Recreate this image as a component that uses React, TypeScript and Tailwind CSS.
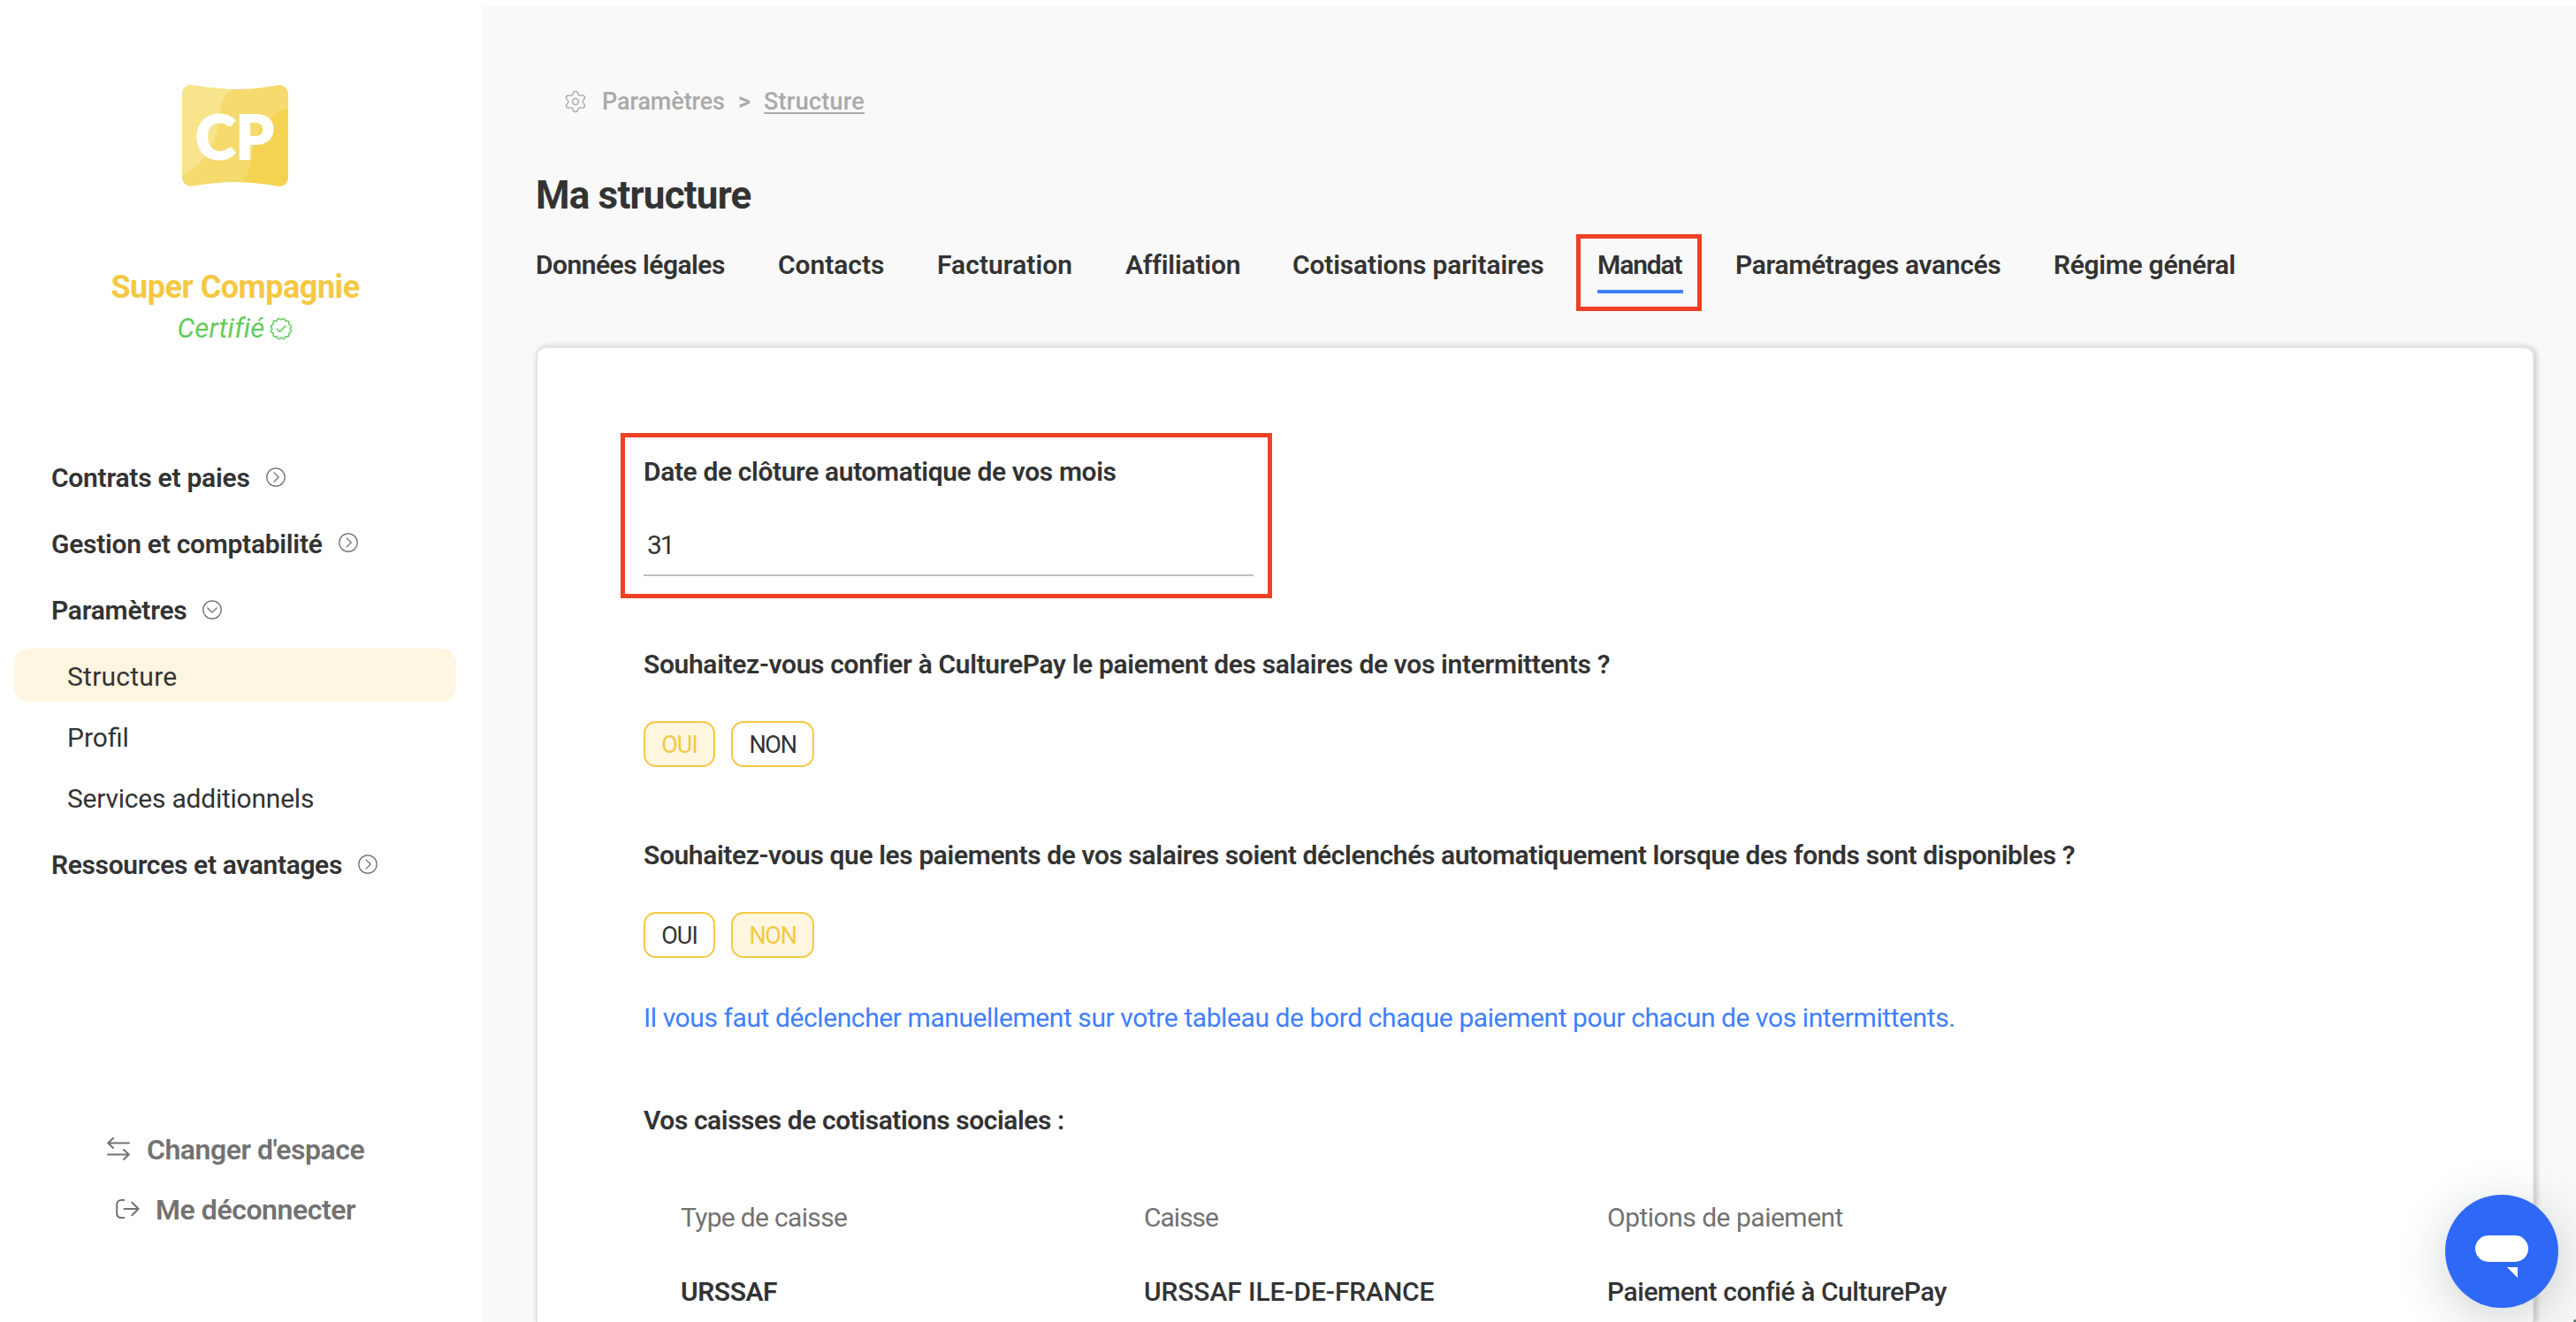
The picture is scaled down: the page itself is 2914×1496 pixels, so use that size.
import React from "react";
import { Settings } from "lucide-react";

function Logo() {
  return (
    <svg width="120" height="115" viewBox="0 0 120 115" className="block">
      <defs>
        <clipPath id="tile">
          <path d="M0 11C0 4 5 -.5 12 .5Q60 9.5 108 .5C115 -.5 120 4 120 11V104C120 111 115 115.5 108 114.5Q60 105.5 12 114.5C5 115.5 0 111 0 104Z" />
        </clipPath>
      </defs>
      <g clipPath="url(#tile)">
        <rect width="120" height="115" fill="#f5da6e" />
        <path d="M58 5C49 10 44 20 42.5 31C40 55 37 68 26 81C18 92 10 98 0 103V0H58Z" fill="#f8e48c" />
        <path d="M120 27C112 29 107 32 102 36C94 42 86 52 82 65C79 78 77 98 69 110V115H120Z" fill="#f5d352" />
      </g>
      <text x="15 60.5" y="83.5" fill="#fff" fontFamily="Lato" fontWeight="900" fontSize="69" stroke="#fff" strokeWidth="2">
        CP
      </text>
    </svg>
  );
}

const scallop =
  Array.from({ length: 144 }, (_, i) => {
    const a = (i / 144) * Math.PI * 2;
    const r = 11.1 + 0.8 * Math.cos(12 * a + Math.PI);
    return `${i ? "L" : "M"}${(13 + r * Math.sin(a)).toFixed(2)} ${(13 - r * Math.cos(a)).toFixed(2)}`;
  }).join("") + "Z";

function CertifiedBadge() {
  return (
    <svg width="26" height="26" viewBox="0 0 26 26" fill="none" stroke="#6fd067" strokeWidth="1.7" strokeLinejoin="round" strokeLinecap="round">
      <path d={scallop} />
      <path d="M8.3 13.4L11.4 16.4L17.9 9.8" />
    </svg>
  );
}

function CircleChevron({ open = false, className = "" }: { open?: boolean; className?: string }) {
  return (
    <svg width="22" height="22" viewBox="0 0 22 22" fill="none" stroke="#6a6a6a" strokeWidth="1.2" strokeLinecap="round" strokeLinejoin="round" className={className}>
      <circle cx="11" cy="11" r="10.2" />
      <path d={open ? "M5.8 9L11 14.2L16.2 9" : "M9 5.8L14.2 11L9 16.2"} />
    </svg>
  );
}

function SwapIcon() {
  return (
    <svg width="26" height="26" viewBox="0 0 26 26" fill="none" stroke="#727272" strokeWidth="2" strokeLinecap="round" strokeLinejoin="round" className="-mt-[2px]">
      <path d="M25 6.5H1.2M7 1L1.2 6.5L7 12" />
      <path d="M1 19.5H24.8M19 14L24.8 19.5L19 25" />
    </svg>
  );
}

function LogoutIcon() {
  return (
    <svg width="27" height="22" viewBox="0 0 27 22" fill="none" stroke="#727272" strokeWidth="2" strokeLinecap="round" strokeLinejoin="round" className="-mt-[2px]">
      <path d="M9.3 1H6.5C3.2 1 1.2 3 1.2 6V16C1.2 19 3.2 21 6.5 21H9.3" />
      <path d="M9.5 11H25.6M18.3 3.8L25.6 11L18.3 18.2" />
    </svg>
  );
}

function Choice({ value }: { value: "OUI" | "NON" }) {
  const on = "border-[#f5c843] bg-[#fff6e0] text-[#f5c843]";
  const off = "border-[#f5c843] bg-white text-[#333333]";
  return (
    <div className="flex h-[52px] gap-[18px] text-[27px] leading-[52px]">
      <div className={`flex w-[81px] items-center justify-center rounded-[14px] border-2 pt-px tracking-[-0.9px] ${value === "OUI" ? on : off}`}>OUI</div>
      <div className={`flex w-[94px] items-center justify-center rounded-[14px] border-2 pt-px tracking-[-1.3px] ${value === "NON" ? on : off}`}>NON</div>
    </div>
  );
}

export default function App() {
  return (
    <div className="relative flex h-[1496px] w-[2914px] overflow-hidden whitespace-nowrap bg-white font-[Roboto,sans-serif] text-[30px] leading-10 text-[#333333]">
      <aside className="flex w-[546px] shrink-0 flex-col pl-4 pr-[30px] pt-24">
        <div className="flex flex-col items-center">
          <Logo />
          <div className="mt-[94px] text-[36px] font-bold tracking-[-0.48px] text-[#f5c843]">Super Compagnie</div>
          <div className="mt-[7px] flex h-10 items-center gap-[6px] text-[#62cc5a]">
            <span className="text-[31px] italic tracking-[0.2px]">Certifié</span>
            <CertifiedBadge />
          </div>
        </div>

        <nav className="mt-[129px] flex flex-col font-semibold">
          <div className="flex h-10 items-center pl-[42px]">
            <span className="w-[243px] tracking-[-0.25px]">Contrats et paies</span>
            <CircleChevron className="-mt-[3px]" />
          </div>
          <div className="mt-[35px] flex h-10 items-center pl-[42px]">
            <span className="w-[325px] tracking-[-0.28px]">Gestion et comptabilité</span>
            <CircleChevron className="-mt-[5px]" />
          </div>
          <div className="mt-[35px] flex h-10 items-center pl-[42px]">
            <span className="w-[171px] tracking-[-0.25px]">Paramètres</span>
            <CircleChevron open className="-mt-[3px]" />
          </div>
          <div className="mt-[23px] flex flex-col gap-[9px] font-normal">
            <div className="flex h-[60px] items-center rounded-2xl bg-[#fff5e0] pl-[60px] pt-[3px] tracking-[0.25px]">Structure</div>
            <div className="flex h-[60px] items-center pl-[60px] pt-1">Profil</div>
            <div className="flex h-[60px] items-center pl-[60px] pt-1 tracking-[-0.23px]">Services additionnels</div>
          </div>
          <div className="mt-[27px] flex h-10 items-center pl-[42px]">
            <span className="w-[347px] tracking-[-0.35px]">Ressources et avantages</span>
            <CircleChevron className="-mt-[3px]" />
          </div>
        </nav>

        <div className="mt-[282px] text-[32px] font-semibold text-[#727272]">
          <div className="flex h-10 items-center gap-[19px] pl-[105px]">
            <SwapIcon />
            <span className="tracking-[-0.48px]">Changer d'espace</span>
          </div>
          <div className="mt-7 flex h-10 items-center gap-[18px] pl-[115px]">
            <LogoutIcon />
            <span className="tracking-[-0.45px]">Me déconnecter</span>
          </div>
        </div>
      </aside>

      <main className="mt-[6px] flex flex-1 flex-col bg-[#f9f9f9] pl-[60px] pt-[89px]">
        <div className="flex h-10 items-center pl-[31px] text-[27px] font-medium text-[#aaaaaa]">
          <Settings size={28} strokeWidth={1.2} />
          <span className="ml-4 w-[154px] tracking-[-0.1px]">Paramètres</span>
          <span className="w-[29px] font-semibold">&gt;</span>
          <span className="tracking-[0.25px] underline decoration-2 underline-offset-[3px]">Structure</span>
        </div>
        <h1 className="mt-14 text-[44px] font-bold leading-[60px] tracking-[-0.8px]">Ma structure</h1>

        <div className="mt-[29px] flex font-semibold">
          <div className="w-[274px] tracking-[-0.52px]">Données légales</div>
          <div className="w-[180px] tracking-[-0.04px]">Contacts</div>
          <div className="w-[213px] tracking-[0.05px]">Facturation</div>
          <div className="w-[189px] tracking-[-0.2px]">Affiliation</div>
          <div className="w-[345px] tracking-[-0.16px]">Cotisations paritaires</div>
          <div className="relative w-[156px]">
            <div className="tracking-[-1.1px]">Mandat</div>
            <div className="mt-2 h-1 w-[97px] bg-[#4080ff]" />
            <div className="absolute -left-6 -top-[15px] h-[87px] w-[142px] border-[5px] border-[#ec4126]" />
          </div>
          <div className="w-[360px] tracking-[-0.34px]">Paramétrages avancés</div>
          <div className="tracking-[-0.3px]">Régime général</div>
        </div>

        <section className="mt-[59px] flex w-[2261px] flex-1 flex-col rounded-t-[12px] border-x-2 border-t-[3px] border-[#e5e5e5] bg-white pl-[120px] pt-[120px] shadow-[2px_1px_6px_rgba(0,0,0,0.22)]">
          <div className="relative w-[690px]">
            <div className="font-semibold tracking-[-0.38px]">Date de clôture automatique de vos mois</div>
            <div className="mt-[43px] flex h-[55px] border-b-2 border-[#bfbfbf] pl-1 tracking-[-2px]">31</div>
            <div className="absolute -left-[26px] -top-6 h-[187px] w-[737px] border-[5px] border-[#ec4126]" />
          </div>

          <div className="mt-20 font-semibold tracking-[-0.35px]">
            Souhaitez-vous confier à CulturePay le paiement des salaires de vos intermittents ?
          </div>
          <div className="mt-11">
            <Choice value="OUI" />
          </div>

          <div className="mt-20 font-semibold tracking-[-0.4px]">
            Souhaitez-vous que les paiements de vos salaires soient déclenchés automatiquement lorsque des fonds sont disponibles ?
          </div>
          <div className="mt-11">
            <Choice value="NON" />
          </div>

          <div className="mt-12 tracking-[-0.41px] text-[#4080ff]">
            Il vous faut déclencher manuellement sur votre tableau de bord chaque paiement pour chacun de vos intermittents.
          </div>

          <div className="mt-[76px] font-semibold tracking-[-0.44px]">Vos caisses de cotisations sociales :</div>

          <div className="-mb-20 mt-[70px] grid grid-cols-[524px_524px_524px] gap-y-11 pl-[42px]">
            <div className="tracking-[-0.68px] text-[#727272]">Type de caisse</div>
            <div className="tracking-[-1px] text-[#727272]">Caisse</div>
            <div className="tracking-[-0.5px] text-[#727272]">Options de paiement</div>
            <div className="font-semibold tracking-[-0.48px]">URSSAF</div>
            <div className="font-medium tracking-[-0.1px]">URSSAF ILE-DE-FRANCE</div>
            <div className="font-medium tracking-[-0.45px]">Paiement confié à CulturePay</div>
          </div>
        </section>
      </main>

      <div className="absolute bottom-4 right-5 flex size-32 flex-col rounded-full bg-[#2e68f7] pl-[34px] pt-[46px] shadow-[0_12px_60px_rgba(0,30,30,0.2)]">
        <div className="h-[30px] w-[60px] rounded-full bg-white" />
        <svg width="12" height="12" viewBox="0 0 12 12" className="ml-9 mt-[6px] block">
          <path d="M0 0H12V12Z" fill="#fff" />
        </svg>
      </div>
      <div className="absolute bottom-0 right-0 size-[3px] rounded-tl-[3px] bg-[#5f7a66]" />
    </div>
  );
}
